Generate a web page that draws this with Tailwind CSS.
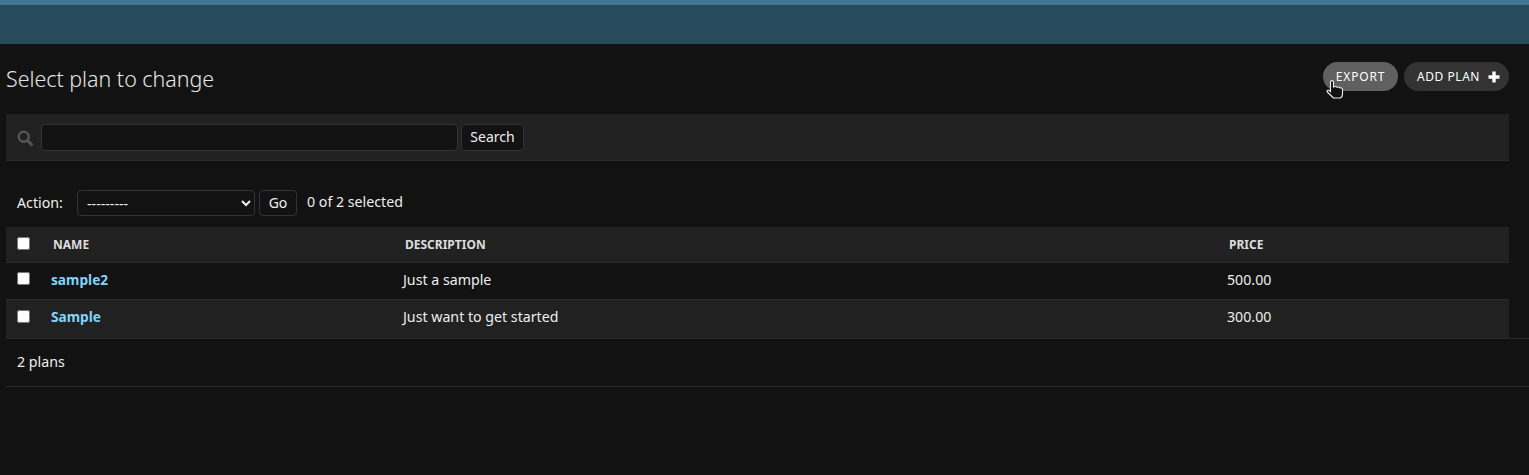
<!DOCTYPE html>
<html lang="en">
<head>
  <meta charset="UTF-8">
  <meta name="viewport" content="width=device-width, initial-scale=1.0">
  <title>Select plan to change</title>
  <script src="https://cdn.jsdelivr.net/npm/@tailwindcss/browser@4"></script>
</head>
<body class="bg-[#121212] text-[#eeeeee] font-['Noto_Sans',sans-serif] text-[14.2px] min-h-screen overflow-hidden">
  <!-- header band -->
  <header class="h-[44px] bg-[#264b5d] border-t-[5px] border-[#417690]"></header>

  <main class="pl-[6px]">
    <div class="pr-[20px] flex items-start justify-between h-[70px]">
      <h1 class="pt-[21px] text-[21.4px] leading-[28px] font-light text-[#e5e5e5]">Select plan to change</h1>
      <div class="relative pt-[18px] flex gap-[6px]">
        <a class="h-[29px] w-[75px] rounded-full bg-[#606060] text-white text-[12px] tracking-[0.8px] flex items-center justify-center">EXPORT</a>
        <a class="h-[29px] w-[105px] pl-[13px] rounded-full bg-[#333333] text-white text-[12px] tracking-[0.55px] flex items-center gap-[8px]">
          ADD PLAN
          <svg width="12" height="12" viewBox="0 0 12 12" fill="#fff"><path d="M4.300 0.500h3.400v3.800h3.800v3.400h-3.800v3.800h-3.400v-3.800h-3.800v-3.400h3.800z"/></svg>
        </a>
        <!-- hand cursor -->
        <svg class="absolute left-[3px] top-[36px]" width="18" height="19" viewBox="0 0 18 19">
          <path d="M4.500 2c0-1.800 3-1.800 3 0v5c1.800-.8 3-.5 3.500.3 1.500-.6 2.500-.2 3 .6 1.500-.3 2.500.4 2.500 1.600v4c0 2.200-1 4-2 4.500H7.500c-2-2-4.200-4-6.200-6-.8-1.300.6-2.500 2-1.500l1.200 1z" fill="#111" stroke="#eeeeee" stroke-width="1.100"/>
        </svg>
      </div>
    </div>

    <!-- search -->
    <form class="mr-[20px] h-[47px] bg-[#212121] border-b border-[#2a2a2a] flex items-center">
      <svg class="ml-[11px] mr-[8px] mt-[1px]" width="16" height="16" viewBox="0 0 16 16" fill="none" stroke="#555555">
        <circle cx="6.800" cy="6.800" r="5" stroke-width="2.400"/>
        <path d="M10.500 10.500l4 4" stroke-width="3" stroke-linecap="round"/>
      </svg>
      <input type="text" class="w-[417px] h-[27px] bg-[#121212] border border-[#333333] rounded-[4px]">
      <button type="button" class="ml-[3px] w-[63px] h-[27px] pb-[1px] bg-[#121212] border border-[#333333] rounded-[4px] text-[14px] text-[#eeeeee]">Search</button>
    </form>

    <!-- actions -->
    <div class="mt-[29px] h-[26px] flex items-center pl-[11px]">
      <label class="w-[60px]">Action:</label>
      <select class="w-[178px] h-[26px] pl-[5px] bg-[#121212] border border-[#333333] rounded-[4px] text-[14.2px] text-[#eeeeee] [color-scheme:dark]">
        <option>---------</option>
      </select>
      <button type="button" class="ml-[4px] w-[38px] h-[26px] pb-[1px] bg-[#121212] border border-[#333333] rounded-[4px] text-[14px]">Go</button>
      <span class="ml-[10px] -mt-[3px]">0 of 2 selected</span>
    </div>

    <!-- results -->
    <table class="mt-[11px] w-[1503px] table-fixed border-collapse">
      <colgroup>
        <col class="w-[39px]">
        <col class="w-[352px]">
        <col class="w-[824px]">
        <col>
      </colgroup>
      <thead>
        <tr class="h-[35px] bg-[#212121] text-[12px] font-bold text-[#dddddd] text-left">
          <th class="pl-[11px] pb-[2px] font-normal"><input type="checkbox" class="block w-[13px] h-[13px]"></th>
          <th class="pl-[8px] pt-[1px] font-bold">NAME</th>
          <th class="pl-[8px] pt-[1px] font-bold">DESCRIPTION</th>
          <th class="pl-[8px] pt-[1px] font-bold">PRICE</th>
        </tr>
      </thead>
      <tbody>
        <tr class="h-[37px] border-t border-[#2a2a2a]">
          <td class="pl-[11px] pb-[4px]"><input type="checkbox" class="block w-[13px] h-[13px]"></td>
          <td class="pl-[6px] text-[13.7px] font-bold text-[#81d4fa]">sample2</td>
          <td class="pl-[6px] pb-[2px]">Just a sample</td>
          <td class="pl-[6px] pb-[2px]">500.00</td>
        </tr>
        <tr class="h-[39px] bg-[#212121] border-t border-[#2a2a2a]">
          <td class="pl-[11px] pb-[5px]"><input type="checkbox" class="block w-[13px] h-[13px]"></td>
          <td class="pl-[6px] pb-[2px] text-[13.7px] font-bold text-[#81d4fa]">Sample</td>
          <td class="pl-[6px] pb-[4px]">Just want to get started</td>
          <td class="pl-[6px] pb-[4px]">300.00</td>
        </tr>
      </tbody>
    </table>

    <div class="h-[49px] pb-[2px] border-t border-b border-[#2a2a2a] flex items-center pl-[11px]">2 plans</div>
  </main>
</body>
</html>
